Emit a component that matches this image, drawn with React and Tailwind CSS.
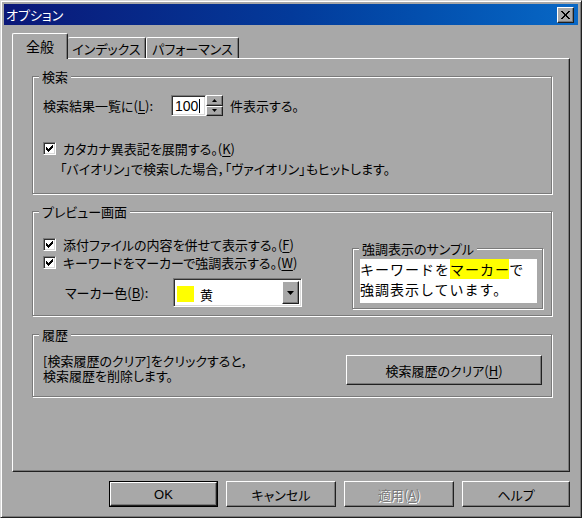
const RAISED =
  "border border-t-white border-l-white border-r-[#202020] border-b-[#202020] shadow-[inset_-1px_-1px_0_#7a7a7a]";
const SUNKEN =
  "border border-t-[#7a7a7a] border-l-[#7a7a7a] border-r-white border-b-white shadow-[inset_1px_1px_0_#303030,inset_-1px_-1px_0_#d8d8d8]";

function U({ children }) {
  return <span className="underline underline-offset-[2px]">{children}</span>;
}

function Check() {
  return (
    <span className={`w-[13px] h-[13px] shrink-0 bg-white flex items-center justify-center ${SUNKEN}`}>
      <svg width="7" height="7" viewBox="0 0 7 7" shapeRendering="crispEdges">
        <path
          d="M6 0h1v3h-1zM5 1h1v3h-1zM4 2h1v3h-1zM3 3h1v3h-1zM2 4h1v3h-1zM1 3h1v3h-1zM0 2h1v3h-1z"
          fill="#000"
        />
      </svg>
    </span>
  );
}

function Group({ label, className = "", children }) {
  return (
    <div className={`relative border border-[#7a7a7a] shadow-[inset_1px_1px_0_#fff,1px_1px_0_#fff] ${className}`}>
      <span className="absolute -top-[8px] left-[6px] bg-[#a8a8a8] px-[3px] leading-[15px]">{label}</span>
      {children}
    </div>
  );
}

function Button({ children, isDefault, disabled, className = "" }) {
  const inner = (
    <div className={`h-full w-full flex items-center justify-center ${RAISED}`}>
      <span className={disabled ? "text-[#7a7a7a] [text-shadow:1px_1px_0_#fff]" : ""}>{children}</span>
    </div>
  );
  if (isDefault) {
    return <div className={`border border-black ${className}`}>{inner}</div>;
  }
  return <div className={className}>{inner}</div>;
}

export default function App() {
  return (
    <div className="w-[582px] h-[518px] overflow-hidden bg-[#a8a8a8] text-black text-[13px] leading-none font-['Noto_Sans_CJK_JP','Noto_Sans',sans-serif] [font-feature-settings:'palt'] border border-t-[#d8d8d8] border-l-[#d8d8d8] border-r-[#202020] border-b-[#202020] shadow-[inset_1px_1px_0_#fff,inset_-1px_-1px_0_#7a7a7a] p-[3px] flex flex-col">
      {/* title bar */}
      <div className="h-[21px] shrink-0 flex items-center justify-between pl-[2px] pr-[4px] bg-gradient-to-r from-[#0a1778] via-[#033a9a] to-[#0868c6]">
        <span className="text-white text-[13px]">オプション</span>
        <div className={`w-[17px] h-[16px] bg-[#a8a8a8] flex items-center justify-center ${RAISED}`}>
          <svg width="9" height="8" viewBox="0 0 9 8" shapeRendering="crispEdges">
            <path d="M0 0h2l2.5 3 2.5-3h2l-3.5 4 3.5 4h-2l-2.5-3-2.5 3h-2l3.5-4z" fill="#000" />
          </svg>
        </div>
      </div>

      <div className="flex-1 flex flex-col mt-[1px] pt-[7px] px-[8px]">
        {/* tabs */}
        <div className="h-[25px] flex items-end relative z-10">
          <div className="w-[56px] h-[26px] -mb-[1px] bg-[#a8a8a8] border-l border-t border-white border-r border-r-[#202020] rounded-t-[2px] shadow-[inset_-1px_0_0_#7a7a7a] flex items-center justify-center pb-[2px] text-[14px]">
            全般
          </div>
          <div className="w-[78px] h-[21px] border-t border-white border-r border-r-[#202020] rounded-t-[2px] shadow-[inset_-1px_0_0_#7a7a7a] flex items-center justify-center">
            インデックス
          </div>
          <div className="w-[93px] h-[21px] border-l border-t border-white border-r border-r-[#202020] rounded-t-[2px] shadow-[inset_-1px_0_0_#7a7a7a] flex items-center justify-center">
            パフォーマンス
          </div>
        </div>

        {/* tab panel */}
        <div className="h-[414px] flex flex-col pl-[19px] pr-[17px] border border-t-white border-l-white border-r-[#202020] border-b-[#202020] shadow-[inset_-1px_-1px_0_#7a7a7a]">
          {/* search */}
          <Group label="検索" className="mt-[17px] h-[118px] pl-[10px]">
            <div className="mt-[18px] h-[21px] flex items-center">
              <span className="w-[128px]">
                検索結果一覧に(<U>L</U>):
              </span>
              <div className={`w-[35px] h-[21px] bg-white flex items-center pl-[3px] ${SUNKEN}`}>
                <span className="text-[14px] [font-feature-settings:normal] font-['Liberation_Sans',sans-serif]">100</span>
                <span className="w-px h-[14px] bg-black ml-[1px]"></span>
              </div>
              <div className="w-[17px] h-[21px] flex flex-col">
                <div className={`flex-1 bg-[#a8a8a8] flex items-center justify-center ${RAISED}`}>
                  <svg width="5" height="3" viewBox="0 0 5 3"><path d="M2.5 0L5 3H0z" fill="#000" /></svg>
                </div>
                <div className={`flex-1 bg-[#a8a8a8] flex items-center justify-center ${RAISED}`}>
                  <svg width="5" height="3" viewBox="0 0 5 3"><path d="M0 0h5L2.5 3z" fill="#000" /></svg>
                </div>
              </div>
              <span className="ml-[7px]">件表示する。</span>
            </div>
            <div className="mt-[24px] h-[16px] flex items-center gap-[7px]">
              <Check />
              <span>
                カタカナ異表記を展開する。(<U>K</U>)
              </span>
            </div>
            <div className="mt-[4px] h-[16px] flex items-center pl-[17px]">
              「バイオリン」で検索した場合，「ヴァイオリン」もヒットします。
            </div>
          </Group>

          {/* preview */}
          <Group label="プレビュー画面" className="mt-[17px] h-[105px] flex justify-between">
            <div className="pl-[10px] pt-[24px] flex flex-col">
              <div className="h-[16px] flex items-center gap-[7px]">
                <Check />
                <span>
                  添付ファイルの内容を併せて表示する。(<U>F</U>)
                </span>
              </div>
              <div className="mt-[2px] h-[16px] flex items-center gap-[7px]">
                <Check />
                <span>
                  キーワードをマーカーで強調表示する。(<U>W</U>)
                </span>
              </div>
              <div className="mt-[8px] h-[29px] flex items-center pl-[22px]">
                <span className="w-[108px]">
                  マーカー色(<U>B</U>):
                </span>
                <div className={`w-[129px] h-[29px] bg-white flex items-center pl-[3px] pr-[2px] ${SUNKEN}`}>
                  <span className="w-[17px] h-[16px] bg-[#ffff00] mt-[3px]"></span>
                  <span className="ml-[6px] mt-[3px]">黄</span>
                  <div className={`ml-auto w-[17px] h-[23px] bg-[#a8a8a8] flex items-center justify-center ${RAISED}`}>
                    <svg width="7" height="4" viewBox="0 0 7 4"><path d="M0 0h7L3.5 4z" fill="#000" /></svg>
                  </div>
                </div>
              </div>
            </div>

            <Group label="強調表示のサンプル" className="mt-[36px] mr-[8px] w-[191px] h-[61px] flex pl-[7px] pt-[10px] pr-[5px] pb-[5px]">
              <div className="flex-1 bg-white text-[14px] leading-[20px] tracking-[1px] [font-feature-settings:normal]">
                <div>
                  キーワードを<span className="bg-[#ffff00]">マーカー</span>で
                </div>
                <div>強調表示しています。</div>
              </div>
            </Group>
          </Group>

          {/* history */}
          <Group label="履歴" className="mt-[18px] h-[63px] flex items-start">
            <div className="mt-[18px] pl-[10px] leading-[15px]">
              <div>[検索履歴のクリア]をクリックすると，</div>
              <div>検索履歴を削除します。</div>
            </div>
            <Button className="mt-[20px] ml-auto mr-[9px] w-[196px] h-[30px]">
              検索履歴のクリア(<U>H</U>)
            </Button>
          </Group>
        </div>

        {/* bottom buttons */}
        <div className="mt-[9px] h-[26px] flex justify-end gap-[8px]">
          <Button isDefault className="w-[109px] h-[26px]">
            <span className="font-['Liberation_Sans',sans-serif]">OK</span>
          </Button>
          <Button className="w-[110px] h-[26px]">キャンセル</Button>
          <Button disabled className="w-[110px] h-[26px]">
            適用(<U>A</U>)
          </Button>
          <Button className="w-[108px] h-[26px]">ヘルプ</Button>
        </div>
      </div>
    </div>
  );
}
